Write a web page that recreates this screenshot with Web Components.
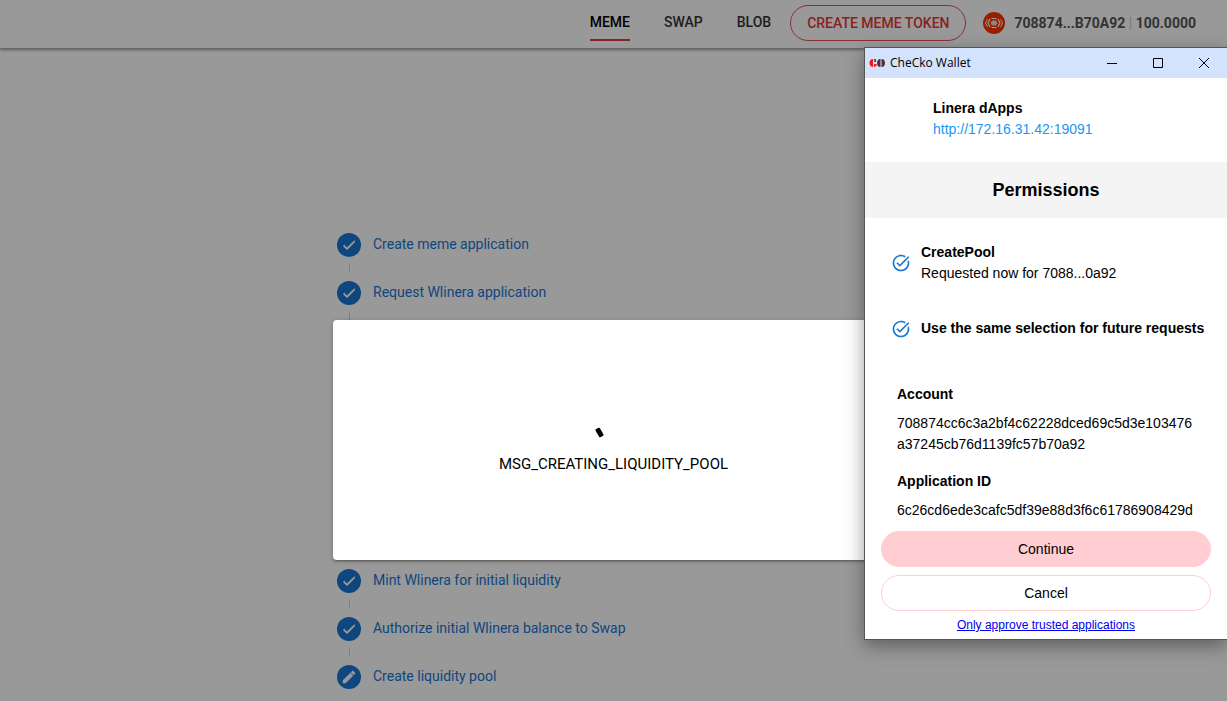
<!DOCTYPE html>
<html lang="en">
<head>
<meta charset="utf-8">
<title>Linera Meme</title>
<style>
  body { margin: 0; background: #fff; font-family: Roboto, "Liberation Sans", sans-serif; font-size: 14px; }
</style>
</head>
<body>
<meme-app></meme-app>
<script>
const define = (name, html, setup) => customElements.define(name, class extends HTMLElement {
  connectedCallback() {
    if (this.shadowRoot) return;
    const t = document.createElement('template');
    t.innerHTML = html;
    this.attachShadow({ mode: 'open' }).append(t.content.cloneNode(true));
    if (setup) setup(this, this.shadowRoot);
  }
});

define('nav-tab', `
<style>
  :host { display: block; }
  a { box-sizing: border-box; display: block; height: 36px; line-height: 34px; border-bottom: 2px solid transparent;
      color: #333; font-weight: 500; text-decoration: none; }
  :host([active]) a { color: #000; border-color: #e53935; }
</style>
<a href="#"><slot></slot></a>`);

define('app-header', `
<style>
  :host { display: block; background: #fff; border-bottom: 1px solid #aaa; box-shadow: 0 1px 3px rgba(0,0,0,.4); }
  header { display: flex; justify-content: flex-end; align-items: center; padding: 5px 31px 7px 16px; }
  nav { display: flex; gap: 34px; margin-right: 19px; }
  button { box-sizing: border-box; height: 36px; padding: 0 16px; border: 1px solid #e05060; border-radius: 18px;
           background: none; color: #e53935; font: 500 14px Roboto, sans-serif; margin-right: 17px; }
  .account { display: flex; align-items: center; gap: 9px; font-weight: 700; color: #555; white-space: nowrap; }
  .sep { color: #ccc; font-weight: 400; }
  svg { display: block; }
</style>
<header>
  <nav><nav-tab active>MEME</nav-tab><nav-tab>SWAP</nav-tab><nav-tab>BLOB</nav-tab></nav>
  <button type="button">CREATE MEME TOKEN</button>
  <div class="account">
    <svg width="22" height="22" viewBox="0 0 22 22" fill="none" stroke="#fff" stroke-width="1">
      <circle cx="11" cy="11" r="11" fill="#ff3300" stroke="none"/>
      <path d="M8.500 6.500h5M8.500 15.500h5" stroke-width="1.200"/>
      <path d="M9 8.500h4l1.500 2.500-1.500 2.500H9L7.500 11z" fill="#fff" fill-opacity=".8" stroke="none"/>
      <path d="M7 7 5 11l2 4M15 7l2 4-2 4" stroke-width="1.200"/>
      <path d="M4.500 7 2.500 11l2 4M17.500 7l2 4-2 4" stroke-width=".9"/>
    </svg>
    <span>708874...B70A92 <span class="sep">|</span> 100.0000</span>
  </div>
</header>`);

define('step-item', `
<style>
  :host { display: grid; grid-template-columns: 24px 1fr; column-gap: 12px; height: 48px; grid-template-rows: 24px 24px; }
  .dot { width: 24px; height: 24px; border-radius: 50%; background: #1976d2; display: grid; place-items: center; }
  svg { width: 16px; height: 16px; fill: #fff; }
  .label { line-height: 22px; color: #1976d2; }
  .line { width: 1px; height: 8px; margin: 8px 0 0 12px; background: #d0d0d0; }
  :host(:last-of-type) .line { display: none; }
</style>
<div class="dot"><svg viewBox="0 0 24 24"><path d="M9 16.170 4.830 12l-1.420 1.410L9 19 21 7l-1.410-1.410z" stroke="#fff"/></svg></div>
<div class="label"><slot></slot></div>
<div class="line"></div>`, (host, root) => {
  if (host.hasAttribute('editing'))
    root.querySelector('path').setAttribute('d', 'M3 17.250V21h3.750L17.810 9.940l-3.750-3.750L3 17.250zM20.710 7.040c.39-.39.39-1.020 0-1.410l-2.340-2.340c-.39-.39-1.020-.39-1.410 0l-1.830 1.830 3.750 3.750 1.830-1.830z');
});

define('step-list', `
<style>:host { display: block; box-sizing: border-box; width: 561px; max-width: 100%; margin: 0 auto; padding: 184px 4px 0; }</style>
<slot></slot>`);

define('progress-dialog', `
<style>
  :host { position: absolute; inset: 0; background: rgba(0,0,0,.4); box-sizing: border-box; padding-top: 320px; }
  section { width: 561px; max-width: 100%; height: 240px; margin: 0 auto; background: #fff; border-radius: 4px;
    box-shadow: 0 1px 5px rgba(0,0,0,.2), 0 2px 2px rgba(0,0,0,.14), 0 3px 1px -2px rgba(0,0,0,.12);
    display: flex; flex-direction: column; align-items: center; justify-content: center; gap: 8px; }
  p { margin: 0; font-size: 15px; line-height: 24px; color: #000; }
</style>
<section role="dialog" aria-label="Progress">
  <svg width="40" height="40" viewBox="0 0 40 40"><rect x="3" y="24" width="5" height="9" rx="1" transform="rotate(-30 5.500 28.500)"/></svg>
  <p><slot></slot></p>
</section>`);

define('check-option', `
<style>
  :host { display: block; }
  label { display: flex; align-items: center; gap: 10px; line-height: 21px; }
  .box { display: grid; width: 20px; height: 20px; flex: none; }
  input, svg { grid-area: 1 / 1; margin: 0; width: 20px; height: 20px; }
  input { appearance: none; }
  svg { pointer-events: none; fill: #1976d2; }
</style>
<label><span class="box"><input type="checkbox" checked>
<svg viewBox="0 0 24 24"><path d="M22 5.180 10.590 16.600l-4.240-4.240 1.410-1.410 2.830 2.830 10-10L22 5.180zM19.790 10.220c.13.570.21 1.170.21 1.780 0 4.420-3.580 8-8 8s-8-3.580-8-8 3.580-8 8-8c1.580 0 3.040.46 4.280 1.250l1.440-1.440C16.100 2.670 14.130 2 12 2 6.480 2 2 6.480 2 12s4.480 10 10 10 10-4.480 10-10c0-1.190-.22-2.330-.6-3.390l-1.610 1.610z"/></svg></span>
<span><slot></slot></span></label>`);

define('pill-button', `
<style>
  :host { display: block; }
  button { box-sizing: border-box; width: 100%; height: 36px; border: 1px solid #ffcdd2; border-radius: 18px; background: #fff;
    color: #000; font: 14px "Liberation Sans", Arial, sans-serif; }
  :host([primary]) button { background: #ffcdd2; }
</style>
<button type="button"><slot></slot></button>`);

define('wallet-window', `
<style>
  :host { position: absolute; top: 47px; right: 0; width: 362px; background: #fff; color: #000; border: 1px solid #555; border-right: 0;
    box-shadow: 0 6px 18px rgba(0,0,0,.38); font: 14px/21px "Liberation Sans", Arial, sans-serif; }
  .bar { display: flex; align-items: center; height: 30px; background: #d3e3fd; padding-left: 4px; font: 12px/30px "Open Sans", "Noto Sans", sans-serif; }
  .bar span { flex: 1; margin-left: 5px; }
  .bar button { width: 46px; height: 30px; padding: 0; border: 0; background: none; display: grid; place-items: center; }
  .bar svg { display: block; }
  .site { padding: 20px 16px 22px 68px; }
  .site a { color: #2196f3; text-decoration: none; display: block; }
  h2 { margin: 0; background: #f4f4f4; font-size: 18px; line-height: 56px; text-align: center; }
  .options { padding: 24px 16px 0 26px; display: grid; gap: 34px; }
  dl { margin: 0; padding: 45px 32px 0; }
  dt { font-weight: 700; }
  dd { margin: 8px 0 16px; overflow-wrap: anywhere; }
  dd:last-child { margin-bottom: 10px; }
  .actions { display: grid; gap: 8px; padding: 0 16px; }
  .note { display: block; text-align: center; font-size: 12px; line-height: 28px; }
  .note a { color: #00e; }
</style>
<div class="bar">
  <svg width="16" height="16" viewBox="0 0 16 16">
    <path d="M4 4C2 4 .5 5.500.5 8S2 12 4 12z" fill="#f01820"/><path d="M5 4h2v3H5zM5 9h2.500v2L5 12z" fill="#f01820"/>
    <path d="M11 4C9.500 4 8 5.500 8 8s1.500 4 3 4zM13 4c1.500 0 3 1.500 3 4s-1.500 4-3 4z" fill="#4c3438"/><path d="M11 4h2v8h-2z" fill="#98898f"/>
  </svg>
  <span>CheCko Wallet</span>
  <button type="button" aria-label="Minimize"><svg width="10" height="10"><path d="M0 5.500h10" stroke="#000"/></svg></button>
  <button type="button" aria-label="Maximize"><svg width="10" height="10"><path d="M.5.5h9v9h-9z" fill="none" stroke="#000"/></svg></button>
  <button type="button" aria-label="Close"><svg width="10" height="10"><path d="M0 0l10 10M10 0 0 10" stroke="#000"/></svg></button>
</div>
<div class="site"><b>Linera dApps</b><a href="#">http://172.16.31.42:19091</a></div>
<h2>Permissions</h2>
<div class="options">
  <check-option><b>CreatePool</b><br>Requested now for 7088...0a92</check-option>
  <check-option><b>Use the same selection for future requests</b></check-option>
</div>
<dl>
  <dt>Account</dt><dd>708874cc6c3a2bf4c62228dced69c5d3e103476<wbr>a37245cb76d1139fc57b70a92</dd>
  <dt>Application ID</dt><dd>6c26cd6ede3cafc5df39e88d3f6c61786908429d</dd>
</dl>
<div class="actions"><pill-button primary>Continue</pill-button><pill-button>Cancel</pill-button></div>
<div class="note"><a href="#">Only approve trusted applications</a></div>`);

define('meme-app', `
<style>:host { display: block; position: relative; min-height: 100vh; overflow: hidden; }</style>
<app-header></app-header>
<step-list>
  <step-item>Create meme application</step-item>
  <step-item>Request Wlinera application</step-item>
  <step-item></step-item>
  <step-item></step-item>
  <step-item></step-item>
  <step-item></step-item>
  <step-item></step-item>
  <step-item>Mint Wlinera for initial liquidity</step-item>
  <step-item>Authorize initial Wlinera balance to Swap</step-item>
  <step-item editing>Create liquidity pool</step-item>
</step-list>
<progress-dialog>MSG_CREATING_LIQUIDITY_POOL</progress-dialog>
<wallet-window></wallet-window>`);
</script>
</body>
</html>
